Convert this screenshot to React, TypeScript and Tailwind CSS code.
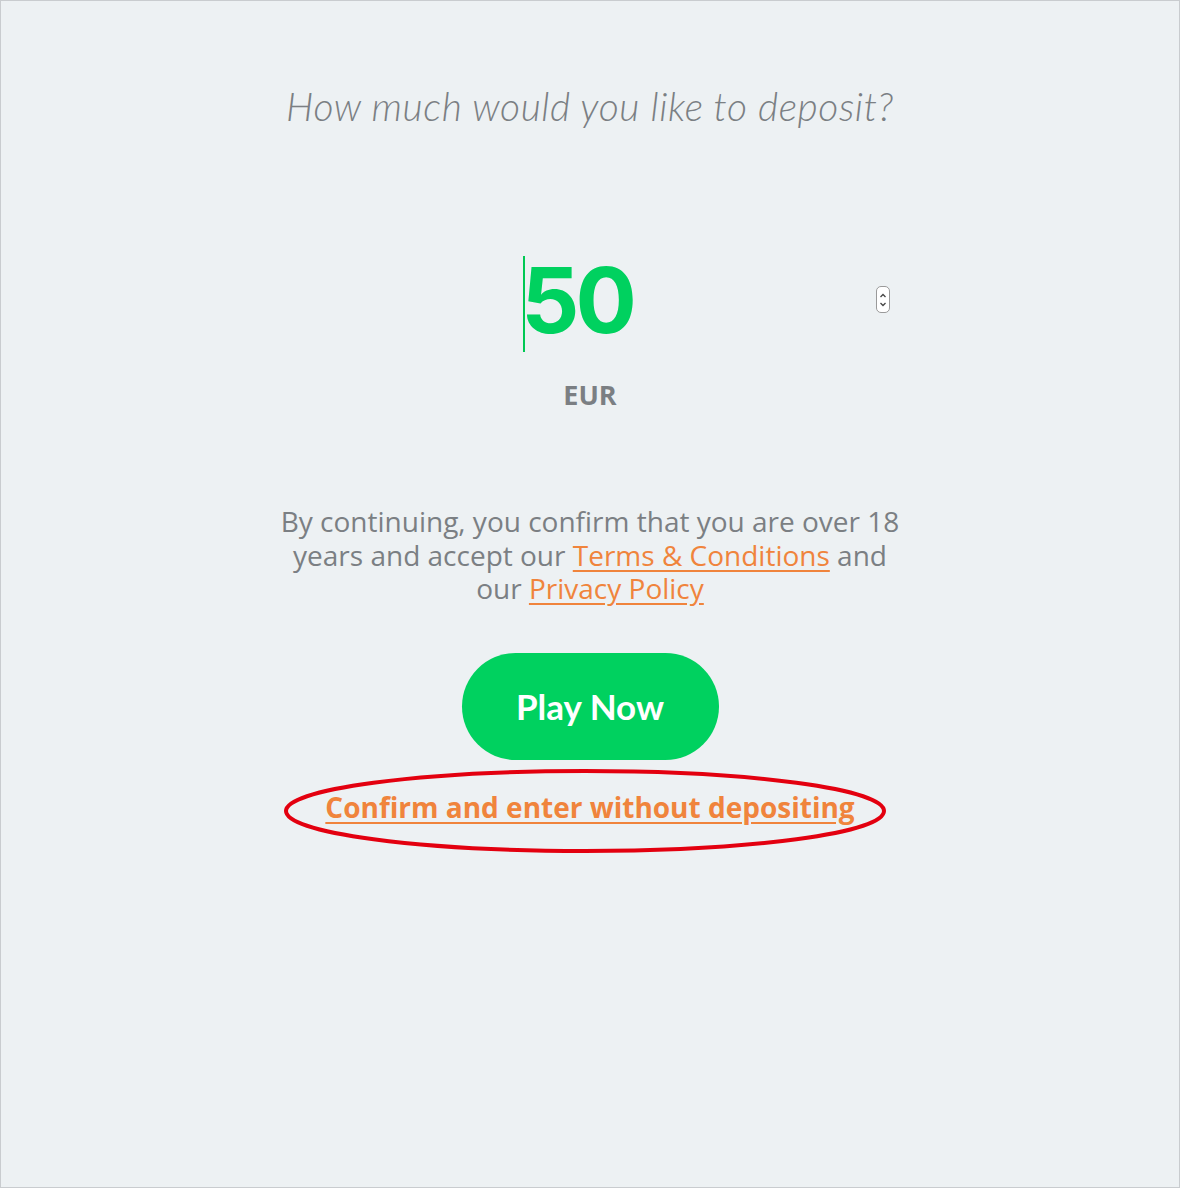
import React from "react";

export default function App() {
  return (
    <main className="flex h-[1188px] w-[1180px] flex-col items-center border border-[#c9cccf] bg-[#edf1f3] font-['Open_Sans',sans-serif]">
      <h1 className="mt-[76px] font-['Lato',sans-serif] text-[39px] font-light italic tracking-[0.6px] text-[#7b7f83]">
        How much would you like to deposit?
      </h1>

      <div className="mt-[116px] flex w-[600px] items-center">
        <div className="flex flex-1 justify-center pr-[12px]">
          <span className="relative font-['Inter',sans-serif] text-[91px] font-bold leading-[96px] tracking-[-4px] text-[#00d15f]">
            <span className="absolute left-[2px] top-[4px] h-[96px] w-[2px] bg-[#00c853]" />
            50
          </span>
        </div>
        <div className="flex h-[27px] w-[14px] flex-col items-center justify-center rounded-[5px] border border-[#9a9a9a] bg-white">
          <svg width="8" height="18" viewBox="0 0 8 18" fill="none" stroke="#444" strokeWidth="1.3">
            <path d="M1.5 6 L4 3.5 L6.5 6" />
            <path d="M1.5 12 L4 14.5 L6.5 12" />
          </svg>
        </div>
      </div>

      <div className="mt-[27px] text-[27px] font-bold text-[#7b7f83]">EUR</div>

      <p className="mt-[90px] w-[640px] text-center text-[28px] leading-[33.5px] text-[#7b7f83]">
        By continuing, you confirm that you are over 18 years and accept our{" "}
        <a className="text-[#f0843c] underline underline-offset-[4px]">Terms &amp; Conditions</a> and our{" "}
        <a className="text-[#f0843c] underline underline-offset-[4px]">Privacy Policy</a>
      </p>

      <button className="mt-[47px] flex h-[107px] w-[257px] items-center justify-center rounded-full bg-[#00d15f] font-['Lato',sans-serif] text-[35px] font-bold text-white">
        Play Now
      </button>

      <div className="relative mt-[26px] flex justify-center">
        <a className="text-[28px] font-bold text-[#f0843c] underline underline-offset-[4px]">
          Confirm and enter without depositing
        </a>
        <svg
          className="absolute left-[calc(50%-5px)] top-[calc(50%+4px)] -translate-x-1/2 -translate-y-1/2"
          width="606"
          height="88"
          viewBox="0 0 606 88"
          fill="none"
        >
          <ellipse cx="303" cy="44" rx="299" ry="40" stroke="#e3000f" strokeWidth="4" />
        </svg>
      </div>
    </main>
  );
}
